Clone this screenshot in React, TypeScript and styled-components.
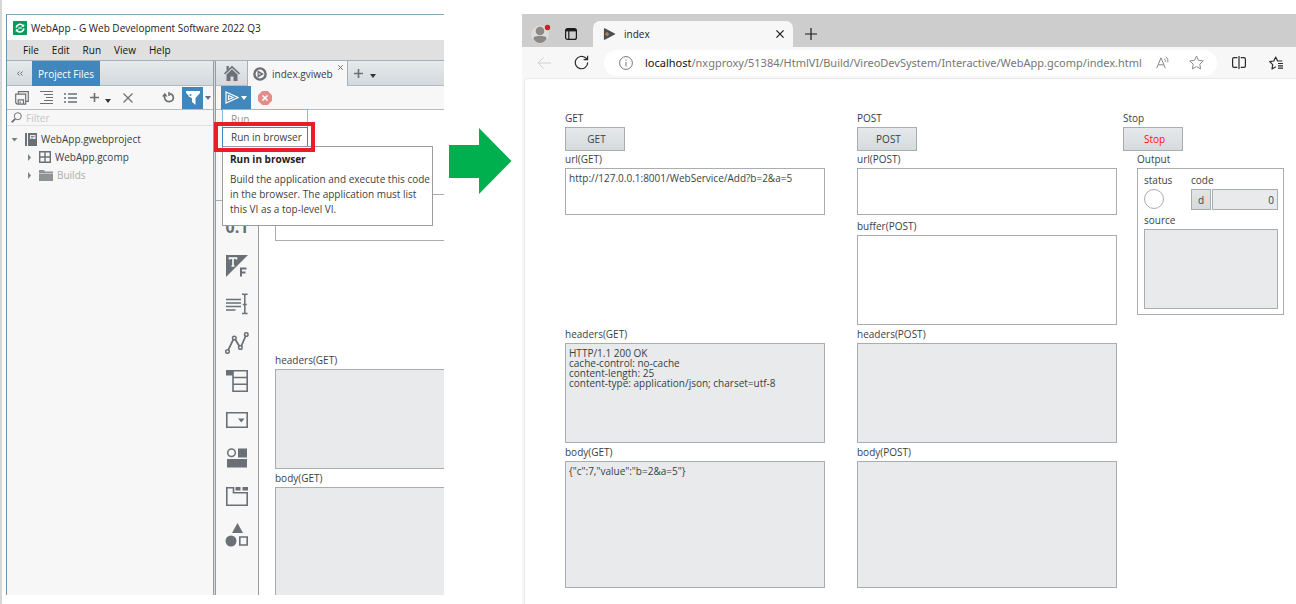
import React from "react";
import styled, { createGlobalStyle, css } from "styled-components";

const ink = "#3a3f43";
const iconGrey = "#6a7075";
const blue = "#4287bb";
const edge = "#a9adb0";
const readOnlyFill = "#e8eaeb";

const GlobalStyle = createGlobalStyle`
  *, *::before, *::after { box-sizing: border-box; }
  body { margin: 0; background: #fff; color: ${ink}; }
  body, button, input, textarea { font-family: "Open Sans", "Noto Sans", sans-serif; font-size: 10px; }
  svg { display: block; flex: none; }
`;

const Page = styled.main`
  display: flex;
  min-height: 100vh;
  border-left: 2px solid #d6d6d6;
  padding-top: 14px;
  overflow: hidden;
`;

const IconButton = styled.button<{ $w?: number; $h?: number; $active?: boolean }>`
  display: flex;
  flex: none;
  align-items: center;
  justify-content: center;
  width: ${(p) => p.$w ?? 16}px;
  height: ${(p) => p.$h ?? 20}px;
  padding: 0;
  border: 0;
  background: ${(p) => (p.$active ? blue : "transparent")};
  color: ${(p) => (p.$active ? "#fff" : iconGrey)};
`;

/* ---------- IDE window ---------- */

const Ide = styled.section`
  display: flex;
  flex-direction: column;
  flex: 0 0 438px;
  min-width: 0;
  margin: 0 0 9px 4px;
  border-top: 1px solid #84a9bd;
  border-left: 1px solid #6d93a8;
  overflow: hidden;
`;

const TitleBar = styled.header`
  display: flex;
  align-items: center;
  gap: 4px;
  height: 25px;
  padding: 0 6px;
  color: #222;
  font-size: 10px;
`;

const MenuBar = styled.nav`
  display: flex;
  align-items: center;
  gap: 13px;
  height: 20px;
  padding: 0 16px;
  background: #e0e0e0;
`;

const MenuItem = styled.button`
  padding: 0;
  border: 0;
  background: none;
  color: #111;
  line-height: 18px;
`;

const Panes = styled.div`
  display: flex;
  flex: 1;
  min-height: 0;
  border-top: 1px solid #a3afb8;
`;

const ProjectPane = styled.section`
  flex: 0 0 206px;
  background: #f7f7f7;
`;

const Splitter = styled.div`
  flex: 0 0 3px;
  border: solid #989da1;
  border-width: 0 1px;
  background: #d3d6d8;
`;

const DocumentPane = styled.section`
  display: flex;
  flex: 1;
  flex-direction: column;
  min-width: 0;
  background: #f7f7f7;
`;

const TabRow = styled.div`
  display: flex;
  height: 25px;
  background: linear-gradient(#e6eaec, #d3d9dd);
  border-bottom: 1px solid #b3bbc0;
`;

const ProjectTab = styled.button`
  width: 68px;
  height: 25px;
  padding: 0;
  border: 0;
  background: ${blue};
  color: #fff;
`;

const FileTab = styled.div`
  display: flex;
  position: relative;
  align-items: center;
  gap: 5px;
  width: 101px;
  height: 25px;
  padding-left: 5px;
  border-left: 1px solid #a9b0b5;
  border-right: 1px solid #a9b0b5;
  background: #f7f7f7;
`;

const TabClose = styled(IconButton)`
  position: absolute;
  top: 0;
  right: 2px;
`;

const Toolbar = styled.div`
  display: flex;
  position: relative;
  align-items: center;
  height: 24px;
  border-bottom: 1px solid #b7bcbf;
`;

const ProjectToolbar = styled(Toolbar)`
  gap: 8px;
  padding: 0 2px 0 7px;
`;

const Pair = styled.div`
  display: flex;
  align-items: center;
  gap: 2px;
`;

const PushRight = styled(Pair)`
  margin-left: auto;
  gap: 6px;
`;

const DocToolbar = styled(Toolbar)`
  gap: 6px;
  padding-left: 5px;
`;

const FilterBox = styled.label`
  display: flex;
  align-items: center;
  gap: 4px;
  height: 16px;
  padding-left: 4px;
  border-bottom: 1px solid #dfe1e2;
  color: ${iconGrey};
`;

const FilterInput = styled.input`
  flex: 1;
  min-width: 0;
  padding: 0;
  border: 0;
  background: none;
  line-height: 14px;
  &::placeholder { color: #c4c6c8; }
`;

const Tree = styled.ul`
  margin: 0;
  padding: 4px 0 0 4px;
  list-style: none;
`;

const TreeItem = styled.li<{ $level: number; $muted?: boolean }>`
  display: flex;
  align-items: center;
  gap: 4px;
  height: 18px;
  padding-left: ${(p) => p.$level * 14}px;
  color: ${(p) => (p.$muted ? "#aaadb0" : ink)};
`;

const TreeToggle = styled(IconButton)`
  margin-right: 3px;
`;

const Editor = styled.div`
  display: flex;
  flex: 1;
  min-height: 0;
`;

const Palette = styled.div`
  display: flex;
  flex: 0 0 43px;
  flex-direction: column;
  align-items: center;
  justify-content: space-between;
  margin-top: 90px;
  padding: 7px 0 41px;
  border-top: 1px solid #a9adb0;
  border-right: 1px solid #989da1;
`;

const PaletteButton = styled(IconButton)`
  width: 26px;
  height: 38px;
`;

const NumericGlyph = styled.span`
  font-size: 16px;
  font-weight: 700;
`;

const Canvas = styled.div`
  display: flex;
  flex: 1;
  flex-direction: column;
  min-width: 0;
  padding: 84px 0 0 16px;
  background: #fff;
  overflow: hidden;
`;

const RunMenu = styled.div`
  position: absolute;
  z-index: 2;
  top: 23px;
  left: 6px;
  width: 86px;
  border: 1px solid #8db8d8;
  background: #fff;
`;

const RunMenuItem = styled.button<{ $selected?: boolean }>`
  display: block;
  width: 100%;
  height: 18px;
  padding: 0 0 0 8px;
  border: 0;
  background: #fff;
  color: #8f9396;
  text-align: left;
  ${(p) =>
    p.$selected &&
    css`
      outline: 1px solid ${blue};
      color: ${ink};
    `}
`;

const Highlight = styled.div`
  position: absolute;
  z-index: 4;
  top: 36px;
  left: -2px;
  width: 101px;
  height: 30px;
  border: 4px solid #ed1c24;
`;

const Tooltip = styled.div`
  position: absolute;
  z-index: 3;
  top: 60px;
  left: 6px;
  width: 211px;
  height: 80px;
  padding: 5px 0 0 7px;
  border: 1px solid #989da1;
  background: #fff;
  line-height: 15px;
  white-space: nowrap;
`;

const TooltipTitle = styled.strong`
  display: block;
  margin-bottom: 5px;
  color: #222;
`;

/* ---------- Front panel controls ---------- */

const FieldLabel = styled.label`
  display: block;
  height: 16px;
  line-height: 14px;
  white-space: nowrap;
`;

const TextBox = styled.textarea<{ $h: number }>`
  display: block;
  flex: none;
  width: 100%;
  height: ${(p) => p.$h}px;
  padding: 4px 3px;
  border: 1px solid ${edge};
  border-radius: 0;
  background: ${(p) => (p.readOnly ? readOnlyFill : "#fff")};
  color: ${ink};
  line-height: 10px;
  resize: none;
  overflow: hidden;
`;

const FieldBox = styled.div<{ $col?: number; $row?: number; $grow?: boolean; $space?: number }>`
  width: 260px;
  margin-top: ${(p) => p.$space ?? 0}px;
  ${(p) => p.$col && css`grid-column: ${p.$col};`}
  ${(p) => p.$row && css`grid-row: ${p.$row};`}
  ${(p) => p.$grow && css`flex: 1 1 0; min-height: 0; overflow: hidden;`}
`;

const PanelButton = styled.button<{ $color?: string }>`
  display: block;
  width: 60px;
  height: 24px;
  padding: 0 0 0 3px;
  border: 1px solid ${edge};
  background: linear-gradient(#e6e9eb, #d5dadd);
  color: ${(p) => p.$color ?? ink};
`;

type FieldProps = {
  id: string;
  label?: string;
  height: number;
  value?: string;
  readOnly?: boolean;
  col?: number;
  row?: number;
  grow?: boolean;
  space?: number;
};

function Field({ id, label, height, value, readOnly, col, row, grow, space }: FieldProps) {
  return (
    <FieldBox $col={col} $row={row} $grow={grow} $space={space}>
      {label && <FieldLabel htmlFor={id}>{label}</FieldLabel>}
      <TextBox id={id} $h={height} defaultValue={value} readOnly={readOnly} spellCheck={false} aria-label={label ?? "url"} />
    </FieldBox>
  );
}

/* ---------- Arrow ---------- */

const ArrowCell = styled.div`
  flex: none;
  margin: 114px 10px 0 5px;
`;

/* ---------- Browser window ---------- */

const Browser = styled.section`
  display: flex;
  flex: 1;
  flex-direction: column;
  min-width: 0;
  background: #f7f7f7;
`;

const TabStrip = styled.div`
  display: flex;
  align-items: center;
  height: 33px;
  padding-left: 9px;
  background: #cdcdcd;
`;

const StripIcon = styled(IconButton)`
  width: 20px;
  height: 22px;
  margin: 6px 0 0;
  color: #1b1b1b;
`;

const WindowIcon = styled(StripIcon)`
  margin-left: 10px;
`;

const NewTabButton = styled(StripIcon)`
  margin-left: 8px;
`;

const BrowserTab = styled.div`
  display: flex;
  align-self: flex-end;
  align-items: center;
  gap: 8px;
  width: 200px;
  height: 26px;
  margin-left: 12px;
  padding: 0 7px 0 10px;
  border-radius: 7px 7px 0 0;
  background: #f7f7f7;
  color: #1b1b1b;
`;

const TabTitle = styled.span`
  flex: 1;
`;

const NavBar = styled.div`
  display: flex;
  align-items: center;
  height: 31px;
  padding: 0 10px 0 12px;
  color: #333;
`;

const NavButton = styled(IconButton)<{ $color?: string }>`
  width: ${(p) => p.$w ?? 20}px;
  color: ${(p) => p.$color ?? "#2b2b2b"};
`;

const Spacer = styled.span<{ $w: number }>`
  flex: none;
  width: ${(p) => p.$w}px;
`;

const AddressBar = styled.div`
  display: flex;
  flex: 1;
  align-items: center;
  min-width: 0;
  height: 26px;
  margin: 0 12px 0 13px;
  padding: 0 11px 0 12px;
  border-radius: 13px;
  background: #fff;
`;

const Url = styled.a`
  flex: 1;
  min-width: 0;
  margin-left: 9px;
  overflow: hidden;
  color: #767676;
  font-family: "Noto Sans", sans-serif;
  font-size: 11px;
  line-height: 18px;
  text-decoration: none;
  white-space: nowrap;
`;

const UrlHost = styled.span`
  color: #111;
`;

const Viewport = styled.div`
  flex: 1;
  margin-left: 2px;
  padding: 32px 13px 16px 40px;
  border: solid #e9e9e9;
  border-width: 1px 0 0 1px;
  border-top-left-radius: 4px;
  background: #fff;
`;

const FrontPanel = styled.div`
  display: grid;
  grid-template-columns: 292px 266px 160px;
  grid-template-rows: 40px 66px 107px 117px 143px;
  row-gap: 1px;
`;

const ClusterCell = styled.div`
  grid-row: 2 / span 3;
  grid-column: 3;
  padding-left: 14px;
`;

const Cluster = styled.fieldset`
  width: 146px;
  height: 147px;
  margin: 0;
  padding: 4px 5px 5px 6px;
  border: 1px solid ${edge};
`;

const ClusterRow = styled.div`
  display: flex;
  gap: 27px;
  margin-bottom: 3px;
`;

const StatusLight = styled.output`
  display: block;
  width: 20px;
  height: 20px;
  border: 1px solid ${edge};
  border-radius: 50%;
`;

const CodeGroup = styled.div`
  display: flex;
  gap: 1px;
`;

const RadixButton = styled.button`
  width: 20px;
  height: 21px;
  padding: 0;
  border: 1px solid ${edge};
  background: linear-gradient(#e2e5e7, #d5dadd);
  color: ${ink};
`;

const CodeInput = styled.input`
  width: 66px;
  height: 21px;
  padding: 0 3px;
  border: 1px solid ${edge};
  background: ${readOnlyFill};
  color: ${ink};
  text-align: right;
`;

const StatusColumn = styled.div`
  width: 20px;
`;

/* ---------- Icons ---------- */

const svgProps = { fill: "none", stroke: "currentColor", "aria-hidden": true } as const;

const Caret = ({ color = iconGrey }: { color?: string }) => (
  <svg width="6" height="4" viewBox="0 0 6 4" fill={color} aria-hidden><path d="M0 0h6L3 4z" /></svg>
);

const LowCaret = () => (
  <svg width="6" height="10" viewBox="0 0 6 10" fill="#333" aria-hidden><path d="M0 6h6L3 10z" /></svg>
);

const AppLogo = () => (
  <svg width="14" height="14" viewBox="0 0 14 14" {...svgProps}>
    <rect width="14" height="14" fill="#0a9a5c" stroke="none" />
    <path d="M3.2 6.6A3.8 3.8 0 0 1 10 4.8M10.8 7.4A3.8 3.8 0 0 1 4 9.4" stroke="#fff" strokeWidth="1.6" />
    <path d="M8.2 5.8h3V2.9zM5.8 8.3h-3v2.9z" fill="#fff" stroke="none" />
    <path d="M5.3 7h3.5" stroke="#fff" strokeWidth="1.2" />
  </svg>
);

const SaveAll = () => (
  <svg width="14" height="14" viewBox="0 0 14 14" {...svgProps} strokeWidth="1.2">
    <path d="M3.5 2.5V.7h9.8v9.6h-2M.7 3.2h10v10H2.2L.7 11.7z" />
    <path d="M3.200 13V8.800h5.300V13M5.200 10.500V12.500" />
  </svg>
);

const IndentList = () => (
  <svg width="13" height="13" viewBox="0 0 13 13" {...svgProps}>
    <path d="M0 .5h13M4 3.5h9M6 6.5h7M4 9.5h9M0 12.5h13" />
  </svg>
);

const BulletList = () => (
  <svg width="13" height="10" viewBox="0 0 13 10" {...svgProps}>
    <path d="M0 1h2M4 1h9M0 5h2M4 5h9M0 9h2M4 9h9" strokeWidth="1.3" />
  </svg>
);

const Plus = ({ size = 9, width = 1.8 }: { size?: number; width?: number }) => (
  <svg width={size} height={size} viewBox="0 0 10 10" {...svgProps} strokeWidth={width}><path d="M5 0v10M0 5h10" /></svg>
);

const Cross = ({ size = 8, width = 1.2 }: { size?: number; width?: number }) => (
  <svg width={size} height={size} viewBox="0 0 10 10" {...svgProps} strokeWidth={width}><path d="M.5.5l9 9M9.5.5l-9 9" /></svg>
);

const Refresh = () => (
  <svg width="13" height="11" viewBox="0 0 13 11" fill="none" stroke={iconGrey} strokeWidth="1.7" aria-hidden>
    <path d="M2.5 3.5C2 7 4 9.7 7 9.7C10 9.7 11.8 7.5 11.3 5C11 3.2 9.5 1.9 7.5 1.9" />
    <path d="M0 4.5L2.8.8 5.5 4.5z" fill={iconGrey} stroke="none" />
    <path d="M7 0v4" strokeWidth="1.5" />
  </svg>
);

const FilterIcon = () => (
  <svg width="14" height="14" viewBox="0 0 14 14" aria-hidden>
    <path d="M0 0h14v2L9.5 7v7L6 11V7.5L0 2z" fill="#fff" />
    <circle cx="4.5" cy="4" r="1.6" fill={blue} stroke="#fff" strokeWidth="1.2" />
  </svg>
);

const Magnifier = () => (
  <svg width="11" height="11" viewBox="0 0 11 11" {...svgProps}><circle cx="6.8" cy="4.2" r="3.5" /><path d="M4.2 6.8L.7 10.3" strokeWidth="1.8" /></svg>
);

const ProjectIcon = () => (
  <svg width="12" height="13" viewBox="0 0 12 13" aria-hidden>
    <path d="M0 0h2v13H0zM3 0h9v13H3z" fill={iconGrey} />
    <path d="M5 2h5.500v4H5z" fill="#e8eaeb" /><path d="M6 3.500h3.500M6 5h2" stroke={iconGrey} strokeWidth=".8" />
  </svg>
);

const ComponentIcon = () => (
  <svg width="12" height="12" viewBox="0 0 12 12" fill="none" stroke={iconGrey} strokeWidth="1.4" aria-hidden>
    <path d="M.7.7h10.6v10.6H.7zM6 .7v10.6M.7 6h10.6" />
  </svg>
);

const FolderIcon = () => (
  <svg width="14" height="11" viewBox="0 0 14 11" fill="#8e9396" aria-hidden><path d="M0 0h5l1 1.4h8V3H0zM0 3.5h14V11H0z" /></svg>
);

const TreeArrow = ({ open }: { open?: boolean }) => (
  <TreeToggle $w={7} $h={10} aria-label={open ? "Collapse item" : "Expand item"}>
    <svg width="7" height="7" viewBox="0 0 7 7" fill="#7b8084" aria-hidden><path d={open ? "M.5 2h6L3.5 5.5z" : "M3 0l3 3.5-3 3.5z"} /></svg>
  </TreeToggle>
);

const HomeIcon = () => (
  <svg width="16" height="16" viewBox="0 0 16 16" fill={iconGrey} aria-hidden>
    <path d="M8 .8L0 8.3l1 1.2L8 3l7 6.5 1-1.2L6 1H3.500v2L1 1z" fill="none" />
    <path d="M8 .8L0 8.3l1 1.2L8 3l7 6.5 1-1.2zM2.500 1h2.300v2.600L2.500 5.700z" />
    <path d="M8 4.300L2.500 9.400V16h4v-4.500h3V16h4V9.400z" />
  </svg>
);

const ViIcon = () => (
  <svg width="14" height="14" viewBox="0 0 14 14" aria-hidden>
    <circle cx="7" cy="7" r="5.6" fill="#f7f7f7" stroke={iconGrey} strokeWidth="2.4" />
    <path d="M4.5 3.2L11 7l-6.500 3.8z" fill={iconGrey} /><path d="M5.5 7h2" stroke="#f7f7f7" />
  </svg>
);

const RunArrow = () => (
  <svg width="14" height="13" viewBox="0 0 14 13" fill="none" stroke="#fff" strokeWidth="1.2" aria-hidden>
    <path d="M1 1l12 5.5L1 12z" /><path d="M3.5 4.5l4.5 2-4.5 2z" />
  </svg>
);

const StopIcon = () => (
  <svg width="14" height="14" viewBox="0 0 14 14" aria-hidden>
    <path d="M4.2 0h5.6L14 4.2v5.6L9.8 14H4.2L0 9.8V4.2z" fill="#e58c8b" />
    <path d="M4.5 4.5l5 5M9.5 4.5l-5 5" stroke="#fff" strokeWidth="1.6" />
  </svg>
);

const paletteIcons: { name: string; icon: React.ReactNode }[] = [
  { name: "Numeric", icon: <NumericGlyph>0.1</NumericGlyph> },
  {
    name: "Boolean",
    icon: (
      <svg width="22" height="22" viewBox="0 0 22 22" aria-hidden>
        <path d="M0 0h22L0 22z" fill={iconGrey} />
        <path d="M3.5 4.5V3.2h7v1.3M7 3.5V11M5.5 11h3" fill="none" stroke="#f7f7f7" strokeWidth="1.7" />
        <path d="M15 21.5V13.5h5.5M15 17.5h4.5" fill="none" stroke={iconGrey} strokeWidth="2" />
      </svg>
    ),
  },
  {
    name: "Text",
    icon: (
      <svg width="22" height="22" viewBox="0 0 22 22" {...svgProps} strokeWidth="1.7">
        <path d="M0 6.500h15M0 10h15M0 13.500h15M0 17h9.500" /><path d="M18.800 2v17.500M16 1.300h2l.8.8.8-.8h2M16 20.500h2l.8-.8.8.8h2M16.800 11.500h4" strokeWidth="1.5" />
      </svg>
    ),
  },
  {
    name: "Graph",
    icon: (
      <svg width="24" height="22" viewBox="0 0 24 22" {...svgProps} strokeWidth="1.5">
        <path d="M3.2 18.2L8.2 7.6M10.2 7.3l4.2 7M16.3 14l4.4-10" strokeWidth="1.8" />
        <circle cx="2.5" cy="19.5" r="1.8" /><circle cx="9.3" cy="6" r="1.8" /><circle cx="15.4" cy="15.5" r="1.8" /><circle cx="21.3" cy="2.5" r="1.8" />
      </svg>
    ),
  },
  {
    name: "Array",
    icon: (
      <svg width="22" height="22" viewBox="0 0 22 22" {...svgProps} strokeWidth="1.6">
        <path d="M0 0h7v5.5H0z" fill={iconGrey} stroke="none" /><path d="M7 .8h14.2v20.4H7zM7 7.5h14M7 14.2h14" />
      </svg>
    ),
  },
  {
    name: "Drop-down",
    icon: (
      <svg width="22" height="16" viewBox="0 0 22 16" {...svgProps} strokeWidth="1.6">
        <path d="M.8.8h20.4v14.4H.8z" /><path d="M12 6.5h6.5l-3.2 4z" fill={iconGrey} stroke="none" />
      </svg>
    ),
  },
  {
    name: "Containers",
    icon: (
      <svg width="20" height="20" viewBox="0 0 20 20" aria-hidden>
        <circle cx="4.5" cy="4.7" r="3.8" fill="none" stroke={iconGrey} strokeWidth="1.5" />
        <path d="M11 .5h9v9h-9zM0 11h20v8.5H0z" fill={iconGrey} />
      </svg>
    ),
  },
  {
    name: "Tabs",
    icon: (
      <svg width="22" height="19" viewBox="0 0 22 19" {...svgProps} strokeWidth="1.6">
        <path d="M.8.8h6.7v5h13.7v12.4H.8z" /><path d="M9.5 0h5v3.5h-5zM16.5 0H22v3.5h-5.5z" fill={iconGrey} stroke="none" />
      </svg>
    ),
  },
  {
    name: "Decorations",
    icon: (
      <svg width="24" height="24" viewBox="0 0 24 24" aria-hidden>
        <path d="M12.5 0l5.500 10H7z" fill={iconGrey} /><circle cx="6" cy="18" r="5.5" fill={iconGrey} />
        <path d="M14.8 14h7.4v8h-7.4z" fill="none" stroke={iconGrey} strokeWidth="1.6" />
      </svg>
    ),
  },
];

const Avatar = () => (
  <svg width="20" height="20" viewBox="0 0 20 20" aria-hidden>
    <circle cx="9" cy="10.5" r="9" fill="#dedcd9" />
    <circle cx="9" cy="7" r="4.3" fill="#8b8885" /><path d="M2.5 15c0-3 3-3 6.5-3s6.5 0 6.5 3C14 17.5 11.5 19 9 19S4 17.5 2.5 15z" fill="#8b8885" />
    <circle cx="16.5" cy="3.5" r="2.7" fill="#e81123" />
  </svg>
);

const WorkspaceIcon = () => (
  <svg width="12" height="12" viewBox="0 0 12 12" {...svgProps} strokeWidth="1.2">
    <rect x=".6" y=".6" width="10.8" height="10.8" rx="2" /><path d="M1 2.2h10" strokeWidth="2.4" /><path d="M3.8 3v8.5" />
  </svg>
);

const Favicon = () => (
  <svg width="13" height="12" viewBox="0 0 13 12" aria-hidden>
    <path d="M1.5.8L11.5 6l-10 5.2z" fill="#4b4f54" stroke="#4b4f54" strokeWidth="1.2" strokeLinejoin="round" /><path d="M4 4v4.2M2 6.1h4.2" stroke="#c98a3f" strokeWidth="1.2" />
  </svg>
);

const BackIcon = () => (
  <svg width="14" height="12" viewBox="0 0 14 12" {...svgProps}><path d="M14 6H1M6.5.5L1 6l5.5 5.5" /></svg>
);

const ReloadIcon = () => (
  <svg width="15" height="15" viewBox="0 0 15 15" {...svgProps} strokeWidth="1.2"><path d="M13.7 7.5A6.2 6.2 0 1 1 11.5 2.8L13.5 4.5" /><path d="M13.6.7v4H9.6" /></svg>
);

const InfoIcon = () => (
  <svg width="14" height="14" viewBox="0 0 14 14" {...svgProps}><circle cx="7" cy="7" r="6.4" /><path d="M7 6v4.5M7 3.5v1.2" /></svg>
);

const ReadAloudIcon = () => (
  <svg width="14" height="13" viewBox="0 0 14 13" {...svgProps}><path d="M.7 12.3L5 1.8l4.3 10.5M2.3 8.8h5.4M8.3 2.8q1.5 1.2 1 3M9.8.8q3 2 2 5.5" /></svg>
);

const StarIcon = () => (
  <svg width="15" height="15" viewBox="0 0 15 15" {...svgProps} strokeLinejoin="round"><path d="M7.5 1l2 4.3 4.7.6-3.4 3.3.8 4.7-4.100-2.300-4.100 2.300.8-4.700L.8 5.900l4.700-.6z" /></svg>
);

const SplitIcon = () => (
  <svg width="14" height="13" viewBox="0 0 14 13" {...svgProps} strokeWidth="1.2"><path d="M5.3 1.7H2q-1.4 0-1.4 1.4v6.8q0 1.4 1.4 1.4h3.3M8.7 1.7H12q1.4 0 1.4 1.4v6.8q0 1.4-1.4 1.4H8.7M7 0v13" /></svg>
);

const FavoritesIcon = () => (
  <svg width="14" height="14" viewBox="0 0 14 14" {...svgProps} strokeWidth="1.2" strokeLinejoin="round"><path d="M6.8 10.8L3 13l.7-4.4L.7 5.6l4.1-.6L6.7 1l1.9 4h4.7M9 7.5h5M9 9.8h5M9 12.1h5" /></svg>
);

/* ---------- Windows ---------- */

function IdeWindow() {
  return (
    <Ide>
      <TitleBar><AppLogo />WebApp - G Web Development Software 2022 Q3</TitleBar>
      <MenuBar>
        {["File", "Edit", "Run", "View", "Help"].map((m) => <MenuItem key={m}>{m}</MenuItem>)}
      </MenuBar>
      <Panes>
        <ProjectPane>
          <TabRow>
            <IconButton $w={25} $h={24} aria-label="Collapse">
              <svg width="6" height="5" viewBox="0 0 6 5" {...svgProps}><path d="M2.5.5l-2 2 2 2M5.5.5l-2 2 2 2" /></svg>
            </IconButton>
            <ProjectTab>Project Files</ProjectTab>
          </TabRow>
          <ProjectToolbar>
            <IconButton aria-label="Save all"><SaveAll /></IconButton>
            <IconButton aria-label="Expand list"><IndentList /></IconButton>
            <IconButton aria-label="Flat list"><BulletList /></IconButton>
            <Pair>
              <IconButton aria-label="Add"><Plus /></IconButton>
              <IconButton $w={8} $h={14} aria-label="Add options"><LowCaret /></IconButton>
            </Pair>
            <IconButton aria-label="Delete"><Cross size={10} /></IconButton>
            <PushRight>
              <IconButton aria-label="Refresh"><Refresh /></IconButton>
              <Pair>
                <IconButton $active $w={21} $h={22} aria-label="Filter"><FilterIcon /></IconButton>
                <Caret />
              </Pair>
            </PushRight>
          </ProjectToolbar>
          <FilterBox><Magnifier /><FilterInput placeholder="Filter" aria-label="Filter" /></FilterBox>
          <Tree>
            <TreeItem $level={0}><TreeArrow open /><ProjectIcon />WebApp.gwebproject</TreeItem>
            <TreeItem $level={1}><TreeArrow /><ComponentIcon />WebApp.gcomp</TreeItem>
            <TreeItem $level={1} $muted><TreeArrow /><FolderIcon />Builds</TreeItem>
          </Tree>
        </ProjectPane>
        <Splitter />
        <DocumentPane>
          <TabRow>
            <IconButton $w={31} $h={24} aria-label="Home"><HomeIcon /></IconButton>
            <FileTab>
              <ViIcon />index.gviweb
              <TabClose $w={10} $h={12} aria-label="Close tab"><Cross size={5} width={2} /></TabClose>
            </FileTab>
            <Pair>
              <IconButton $w={20} aria-label="New tab"><Plus /></IconButton>
              <IconButton $w={6} $h={14} aria-label="Tab list"><LowCaret /></IconButton>
            </Pair>
          </TabRow>
          <DocToolbar>
            <IconButton $active $w={30} $h={24} aria-label="Run">
              <Pair><RunArrow /><Caret color="#fff" /></Pair>
            </IconButton>
            <IconButton aria-label="Abort"><StopIcon /></IconButton>
            <RunMenu>
              <RunMenuItem>Run</RunMenuItem>
              <RunMenuItem $selected>Run in browser</RunMenuItem>
            </RunMenu>
            <Highlight />
            <Tooltip role="tooltip">
              <TooltipTitle>Run in browser</TooltipTitle>
              Build the application and execute this code<br />
              in the browser. The application must list<br />
              this VI as a top-level VI.
            </Tooltip>
          </DocToolbar>
          <Editor>
            <Palette>
              {paletteIcons.map((p) => <PaletteButton key={p.name} aria-label={p.name}>{p.icon}</PaletteButton>)}
            </Palette>
            <Canvas>
              <Field id="design-url" height={47} />
              <Field id="design-headers" label="headers(GET)" height={100} readOnly space={112} />
              <Field id="design-body" label="body(GET)" height={127} readOnly grow space={2} />
            </Canvas>
          </Editor>
        </DocumentPane>
      </Panes>
    </Ide>
  );
}

function BrowserWindow() {
  return (
    <Browser>
      <TabStrip>
        <StripIcon aria-label="Profile"><Avatar /></StripIcon>
        <WindowIcon aria-label="Workspaces"><WorkspaceIcon /></WindowIcon>
        <BrowserTab>
          <Favicon /><TabTitle>index</TabTitle>
          <NavButton $w={12} $color="#1b1b1b" aria-label="Close"><Cross size={8} width={1.5} /></NavButton>
        </BrowserTab>
        <NewTabButton aria-label="New tab"><Plus size={12} width={1} /></NewTabButton>
      </TabStrip>
      <NavBar>
        <NavButton $color="#cfcfcf" aria-label="Back"><BackIcon /></NavButton>
        <Spacer $w={17} />
        <NavButton aria-label="Reload"><ReloadIcon /></NavButton>
        <AddressBar>
          <NavButton $color="#767676" aria-label="Site information"><InfoIcon /></NavButton>
          <Url href="#"><UrlHost>localhost</UrlHost>/nxgproxy/51384/HtmlVI/Build/VireoDevSystem/Interactive/WebApp.gcomp/index.html</Url>
          <NavButton $color="#8a8a8a" aria-label="Read aloud"><ReadAloudIcon /></NavButton>
          <Spacer $w={13} />
          <NavButton $color="#8a8a8a" aria-label="Add to favorites"><StarIcon /></NavButton>
        </AddressBar>
        <NavButton aria-label="Split screen"><SplitIcon /></NavButton>
        <Spacer $w={17} />
        <NavButton aria-label="Favorites"><FavoritesIcon /></NavButton>
      </NavBar>
      <Viewport>
        <FrontPanel>
          <FieldBox $col={1} $row={1}><FieldLabel htmlFor="get">GET</FieldLabel><PanelButton id="get">GET</PanelButton></FieldBox>
          <FieldBox $col={2} $row={1}><FieldLabel htmlFor="post">POST</FieldLabel><PanelButton id="post">POST</PanelButton></FieldBox>
          <div><FieldLabel htmlFor="stop">Stop</FieldLabel><PanelButton id="stop" $color="#ff1010">Stop</PanelButton></div>

          <Field id="url-get" label="url(GET)" height={47} value="http://127.0.0.1:8001/WebService/Add?b=2&a=5" col={1} row={2} />
          <Field id="headers-get" label="headers(GET)" height={100} readOnly col={1} row={4}
            value={"HTTP/1.1 200 OK\ncache-control: no-cache\ncontent-length: 25\ncontent-type: application/json; charset=utf-8"} />
          <Field id="body-get" label="body(GET)" height={127} readOnly col={1} row={5} value={'{"c":7,"value":"b=2&a=5"}'} />

          <Field id="url-post" label="url(POST)" height={47} col={2} row={2} />
          <Field id="buffer-post" label="buffer(POST)" height={90} col={2} row={3} />
          <Field id="headers-post" label="headers(POST)" height={100} readOnly col={2} row={4} />
          <Field id="body-post" label="body(POST)" height={127} readOnly col={2} row={5} />

          <ClusterCell>
            <FieldLabel as="div" id="output">Output</FieldLabel>
            <Cluster aria-labelledby="output">
              <ClusterRow>
                <StatusColumn><FieldLabel htmlFor="status">status</FieldLabel><StatusLight id="status" /></StatusColumn>
                <div>
                  <FieldLabel htmlFor="code">code</FieldLabel>
                  <CodeGroup><RadixButton>d</RadixButton><CodeInput id="code" defaultValue="0" readOnly /></CodeGroup>
                </div>
              </ClusterRow>
              <FieldLabel htmlFor="source">source</FieldLabel>
              <TextBox id="source" $h={80} readOnly />
            </Cluster>
          </ClusterCell>
        </FrontPanel>
      </Viewport>
    </Browser>
  );
}

export default function App() {
  return (
    <Page>
      <GlobalStyle />
      <IdeWindow />
      <ArrowCell>
        <svg width="63" height="66" viewBox="0 0 63 66" role="img" aria-label="leads to">
          <path d="M0 17h30V0l32.5 33L30 66V50H0z" fill="#00b04f" />
        </svg>
      </ArrowCell>
      <BrowserWindow />
    </Page>
  );
}
